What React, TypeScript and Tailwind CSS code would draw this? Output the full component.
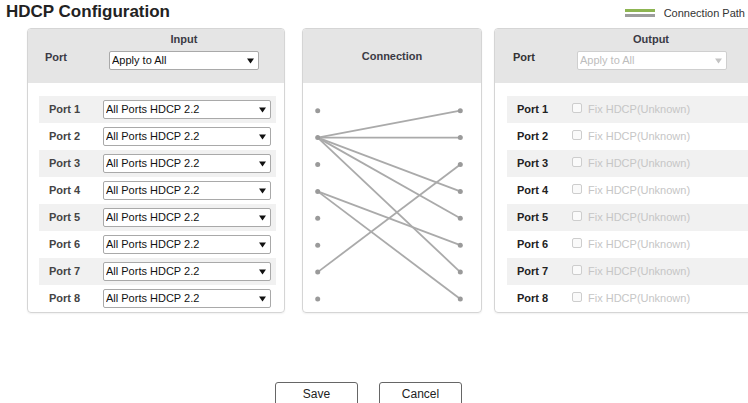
const ports = [1, 2, 3, 4, 5, 6, 7, 8]

// input index -> output index
const links: [number, number][] = [
  [1, 0],
  [1, 1],
  [1, 3],
  [1, 4],
  [1, 6],
  [3, 5],
  [3, 7],
  [6, 2],
]

const dotY = (i: number) => 27.7 + i * 26.9

function Arrow({ disabled }: { disabled?: boolean }) {
  return (
    <svg
      className="pointer-events-none absolute top-1/2 -translate-y-1/2 right-[5px]"
      width="7"
      height="6"
      viewBox="0 0 7 6"
    >
      <path d="M0 0.5 H7 L3.5 5.5 Z" fill={disabled ? '#c4c4c4' : '#111'} />
    </svg>
  )
}

function Select({ value, width, disabled }: { value: string; width: string; disabled?: boolean }) {
  return (
    <div className={`relative h-[19px] ${width}`}>
      <select
        disabled={disabled}
        defaultValue={value}
        className={`appearance-none block w-full h-full border rounded-[2px] pl-[2px] text-[11px] leading-[17px] outline-none ${
          disabled ? 'border-[#cfcfcf] bg-white text-[#bdbdbd]' : 'border-[#a9a9a9] bg-white text-[#111]'
        }`}
      >
        <option>{value}</option>
      </select>
      <Arrow disabled={disabled} />
    </div>
  )
}

function PanelHeader({ title, children }: { title: string; children?: React.ReactNode }) {
  return (
    <div className="h-[54px] pt-[3px] bg-[#e5e5e5] rounded-t-[3px]">
      <div className="flex h-[14px]">
        <div className="w-[81px]" />
        <div className="w-[150px] text-center text-[11px] leading-[14px] font-bold text-[#3a3a44]">{title}</div>
      </div>
      {children}
    </div>
  )
}

export default function App() {
  return (
    <div className="w-[748px] h-[403px] overflow-hidden bg-white font-['Liberation_Sans',Arial,sans-serif]">
      <div className="flex justify-between h-[28px]">
        <div className="pl-[6px] pt-[2px] text-[17px] leading-[20px] font-bold text-[#222]">HDCP Configuration</div>
        <div className="flex items-center gap-[9px] mt-[6px] h-[14px] pr-[3px]">
          <div className="flex flex-col gap-[2px]">
            <div className="w-[30px] h-[3px] bg-[#8db552]" />
            <div className="w-[30px] h-[3px] bg-[#9d9d9d]" />
          </div>
          <span className="text-[11px] leading-[14px] text-[#333]">Connection Path</span>
        </div>
      </div>

      <div className="flex pl-[27px]">
        {/* Input */}
        <div className="w-[258px] shrink-0 border border-[#d5d5d5] rounded-[4px] shadow-[0_1px_2px_rgba(0,0,0,0.06)]">
          <PanelHeader title="Input">
            <div className="flex mt-[5px]">
              <div className="w-[81px] pl-[17px] text-[11px] leading-[14px] font-bold text-[#3a3a44] -mt-[1px]">Port</div>
              <Select value="Apply to All" width="w-[150px]" />
            </div>
          </PanelHeader>
          <div className="pt-[13px] pl-[11px] pr-[8px]">
            {ports.map((p, i) => (
              <div
                key={p}
                className={`flex items-center h-[27px] pl-[10px] pr-[4px] ${i % 2 === 0 ? 'bg-[#f1f1f1]' : 'bg-white'}`}
              >
                <div className="w-[54px] text-[11px] font-bold text-[#444]">Port {p}</div>
                <Select value="All Ports HDCP 2.2" width="w-[168px]" />
              </div>
            ))}
          </div>
        </div>

        {/* Connection */}
        <div className="w-[180px] shrink-0 ml-[17px] border border-[#d5d5d5] rounded-[4px] shadow-[0_1px_2px_rgba(0,0,0,0.06)]">
          <div className="h-[54px] bg-[#e5e5e5] rounded-t-[3px] flex items-center justify-center text-[11px] font-bold text-[#3a3a44]">
            Connection
          </div>
          <svg width="178" height="229" viewBox="0 0 178 229" className="block">
            {links.map(([a, b]) => (
              <line
                key={`${a}-${b}`}
                x1="14.7"
                y1={dotY(a)}
                x2="157.3"
                y2={dotY(b)}
                stroke="#aaaaaa"
                strokeWidth="1.8"
              />
            ))}
            {ports.map((p, i) => (
              <g key={p}>
                <circle cx="14.7" cy={dotY(i)} r="2.5" fill="#9a9a9a" />
                <circle cx="157.3" cy={dotY(i)} r="2.5" fill="#9a9a9a" />
              </g>
            ))}
          </svg>
        </div>

        {/* Output */}
        <div className="w-[290px] shrink-0 ml-[12px] border border-[#d5d5d5] rounded-[4px] shadow-[0_1px_2px_rgba(0,0,0,0.06)]">
          <PanelHeader title="Output">
            <div className="flex mt-[5px]">
              <div className="w-[82px] pl-[18px] text-[11px] leading-[14px] font-bold text-[#333] -mt-[1px]">Port</div>
              <Select value="Apply to All" width="w-[150px]" disabled />
            </div>
          </PanelHeader>
          <div className="pt-[13px] pl-[12px] pr-[8px]">
            {ports.map((p, i) => (
              <div
                key={p}
                className={`flex items-center h-[27px] pl-[10px] ${i % 2 === 0 ? 'bg-[#f1f1f1]' : 'bg-white'}`}
              >
                <div className="w-[55px] text-[11px] font-bold text-[#222]">Port {p}</div>
                <span className="w-[10px] h-[10px] border border-[#cdcdcd] rounded-[2px] bg-[#fafafa] -mt-[3px]" />
                <span className="ml-[6px] text-[11px] text-[#c6c6c6]">Fix HDCP(Unknown)</span>
              </div>
            ))}
          </div>
        </div>
      </div>

      <div className="flex justify-center gap-[21px] pr-[11px] mt-[69px]">
        <button className="w-[83px] h-[23px] border border-[#666] rounded-t-[3px] bg-white text-[12px] text-[#222]">Save</button>
        <button className="w-[83px] h-[23px] border border-[#666] rounded-t-[3px] bg-white text-[12px] text-[#222]">Cancel</button>
      </div>
    </div>
  )
}
